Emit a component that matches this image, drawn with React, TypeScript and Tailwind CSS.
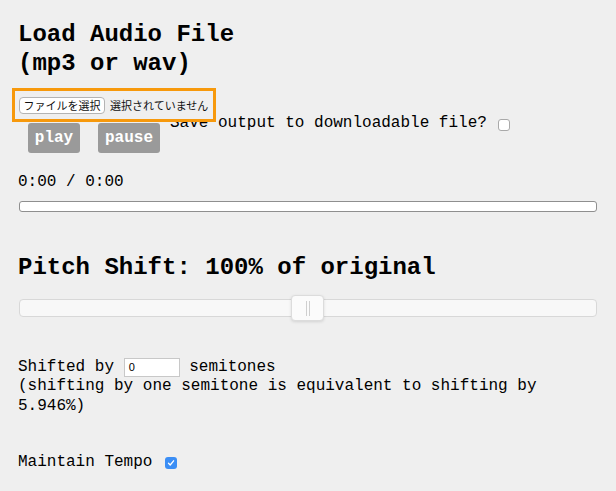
import React from 'react';

const Checkbox: React.FC<{ checked?: boolean; className?: string }> = ({ checked, className = '' }) => {
  if (checked) {
    return (
      <span className={`inline-flex w-[12px] h-[12px] items-center justify-center rounded-[3px] bg-[#3b8ef5] ${className}`}>
        <svg width="8" height="8" viewBox="0 0 8 8" fill="none">
          <path d="M1.5 4.3 L3.2 6 L6.6 1.8" stroke="white" strokeWidth="1.3" strokeLinecap="round" strokeLinejoin="round" />
        </svg>
      </span>
    );
  }
  return (
    <span className={`inline-block w-[12px] h-[12px] rounded-[3px] border border-[#a9a9a9] bg-white ${className}`} />
  );
};

const App: React.FC = () => {
  return (
    <div className="min-h-[491px] bg-[#efefef] px-[18px] pt-[20px] text-black font-['Liberation_Mono','Courier_New',monospace]">
      <h1 className="text-[24px] leading-[29px] font-bold">
        Load Audio File
        <br />
        (mp3 or wav)
      </h1>

      {/* file picker with focus ring */}
      <div className="relative z-10 mt-[10px] -ml-[6px] flex h-[34px] w-[204px] items-center border-[3px] border-[#f7990c] bg-[#efefef] pl-[4px] font-['Noto_Sans_CJK_JP',sans-serif] text-[11px]">
        <span className="flex h-[17px] w-[86px] items-center justify-center rounded-[4px] border border-[#b4b4b4] bg-white leading-none text-[#111]">
          ファイルを選択
        </span>
        <span className="ml-[5px] leading-none text-[#111]">選択されていません</span>
      </div>

      <div className="flex items-start">
        <button className="ml-[10px] mt-[1px] h-[30px] w-[52px] rounded-[3px] bg-[#9a9a9a] text-[16px] font-bold leading-[18px] text-white">
          play
        </button>
        <button className="ml-[18px] mt-[1px] h-[30px] w-[62px] rounded-[3px] bg-[#9a9a9a] text-[16px] font-bold leading-[18px] text-white">
          pause
        </button>
        <div className="ml-[10px] -mt-[8px] flex items-start text-[16px] leading-[19px]">
          <span>Save output to downloadable file?</span>
          <Checkbox className="ml-[11px] mt-[5px]" />
        </div>
      </div>

      <div className="mt-[20px] text-[16px] leading-[19px]">0:00 / 0:00</div>
      <div className="mx-[1px] mt-[9px] h-[11px] rounded-[3px] border border-[#8f8f8f] bg-white" />

      <h2 className="mt-[41px] text-[24px] leading-[29px] font-bold">Pitch Shift: 100% of original</h2>

      <div className="relative mx-[1px] mt-[13px] flex h-[26px] items-center">
        <div className="h-[18px] w-full rounded-[4px] border border-[#d8d8d8] bg-[#f8f8f8]" />
        <div className="absolute left-[272px] top-0 flex h-[26px] w-[33px] items-center justify-center gap-[2px] rounded-[4px] border border-[#dcdcdc] bg-[#fbfbfb] shadow-[0_1px_3px_rgba(0,0,0,0.12)]">
          <span className="h-[15px] w-px bg-[#cfcfcf]" />
          <span className="h-[15px] w-px bg-[#cfcfcf]" />
        </div>
      </div>

      <div className="mt-[37px] text-[16px] leading-[19.3px]">
        Shifted by{' '}
        <span className="inline-block h-[19px] w-[56px] border border-[#c8c8c8] bg-white pl-[4px] align-top font-['Liberation_Sans',sans-serif] text-[11px] leading-[17px]">
          0
        </span>{' '}
        semitones
        <br />
        (shifting by one semitone is equivalent to shifting by
        <br />
        5.946%)
      </div>

      <div className="mt-[37px] flex items-start text-[16px] leading-[19px]">
        <span>Maintain Tempo</span>
        <Checkbox checked className="ml-[13px] mt-[4px]" />
      </div>
    </div>
  );
};

export default App;
